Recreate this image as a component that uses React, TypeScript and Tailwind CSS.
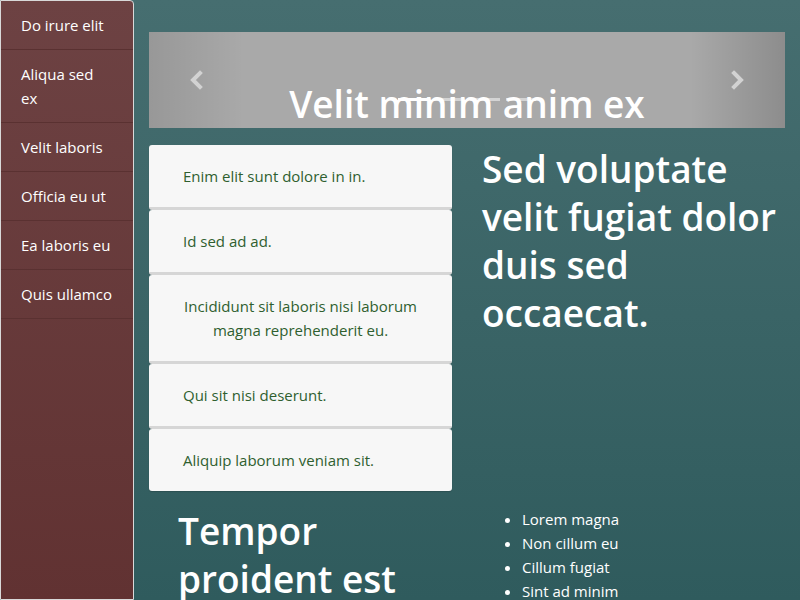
const navItems = ['Do irure elit', 'Aliqua sed ex', 'Velit laboris', 'Officia eu ut', 'Ea laboris eu', 'Quis ullamco'];

const listItems = [
  'Enim elit sunt dolore in in.',
  'Id sed ad ad.',
  'Incididunt sit laboris nisi laborum magna reprehenderit eu.',
  'Qui sit nisi deserunt.',
  'Aliquip laborum veniam sit.',
];

const bullets = ['Lorem magna', 'Non cillum eu', 'Cillum fugiat', 'Sint ad minim'];

function Chevron({ dir }: { dir: 'left' | 'right' }) {
  return (
    <svg width="14" height="20" viewBox="0 0 14 20" className="block">
      <polyline
        points={dir === 'left' ? '11,3 4,10 11,17' : '3,3 10,10 3,17'}
        fill="none"
        stroke="#d2d2d2"
        strokeWidth="4"
        strokeLinecap="square"
      />
    </svg>
  );
}

export default function App() {
  return (
    <div
      className="flex h-[600px] w-[800px] overflow-hidden bg-gradient-to-b from-[#466e70] to-[#2f5b5d] text-white"
      style={{ fontFamily: '"Open Sans", "Noto Sans", sans-serif' }}
    >
      {/* Sidebar */}
      <nav className="flex w-[134px] shrink-0 flex-col rounded-tr-[4px] border border-[#d9d9d9] bg-gradient-to-b from-[#6d4243] to-[#613232]">
        {navItems.map((item) => (
          <a key={item} className="block border-b border-[#5a3131] px-5 py-3 text-[15px] leading-6">
            {item}
          </a>
        ))}
      </nav>

      {/* Main */}
      <main className="flex-1 px-[15px] pt-8">
        {/* Carousel */}
        <div className="relative h-24 overflow-hidden bg-[#a9a9a9]">
          <div className="absolute inset-y-0 left-0 w-[15%] bg-gradient-to-r from-[rgba(0,0,0,0.1)] to-transparent" />
          <div className="absolute inset-y-0 right-0 w-[15%] bg-gradient-to-l from-[rgba(0,0,0,0.17)] to-transparent" />
          <div className="absolute left-[40px] top-[38px]">
            <Chevron dir="left" />
          </div>
          <div className="absolute right-[40px] top-[38px]">
            <Chevron dir="right" />
          </div>
          <div className="absolute left-0 right-0 top-[66px] flex justify-center">
            <span className="mx-[3px] h-[3px] w-[30px] bg-white" />
            <span className="mx-[3px] h-[3px] w-[30px] bg-white/50" />
            <span className="mx-[3px] h-[3px] w-[30px] bg-white/50" />
            <span className="mx-[3px] h-[3px] w-[30px] bg-white/50" />
          </div>
          <h2 className="absolute left-0 right-0 top-[48px] text-center text-[37px] font-semibold leading-[48px]">
            Velit minim anim ex
          </h2>
        </div>

        <div className="mt-[17px] flex">
          <div className="w-[318px] pr-[15px]">
            {listItems.map((item) => (
              <div
                key={item}
                className="rounded-[3px] border-b-[3px] border-[#d6d6d6] bg-[#f7f7f7] px-[34px] py-[19px] text-[15px] leading-6 text-[#2f5f2f] shadow-[0_1px_1px_rgba(0,0,0,0.15)] last:border-b-0"
              >
                <span className="inline-block text-center">{item}</span>
              </div>
            ))}
          </div>
          <div className="flex-1 pl-[15px]">
            <h1 className="text-[37px] font-semibold leading-[48px]">
              Sed voluptate velit fugiat dolor duis sed occaecat.
            </h1>
          </div>
        </div>

        <div className="mt-4 flex">
          <div className="w-[318px] pl-[29px] pr-[15px]">
            <h1 className="text-[37px] font-semibold leading-[48px]">Tempor proident est</h1>
          </div>
          <div className="flex-1 pl-[15px]">
            <ul className="list-disc pl-10 text-[15px] leading-6">
              {bullets.map((b) => (
                <li key={b}>{b}</li>
              ))}
            </ul>
          </div>
        </div>
      </main>
    </div>
  );
}
